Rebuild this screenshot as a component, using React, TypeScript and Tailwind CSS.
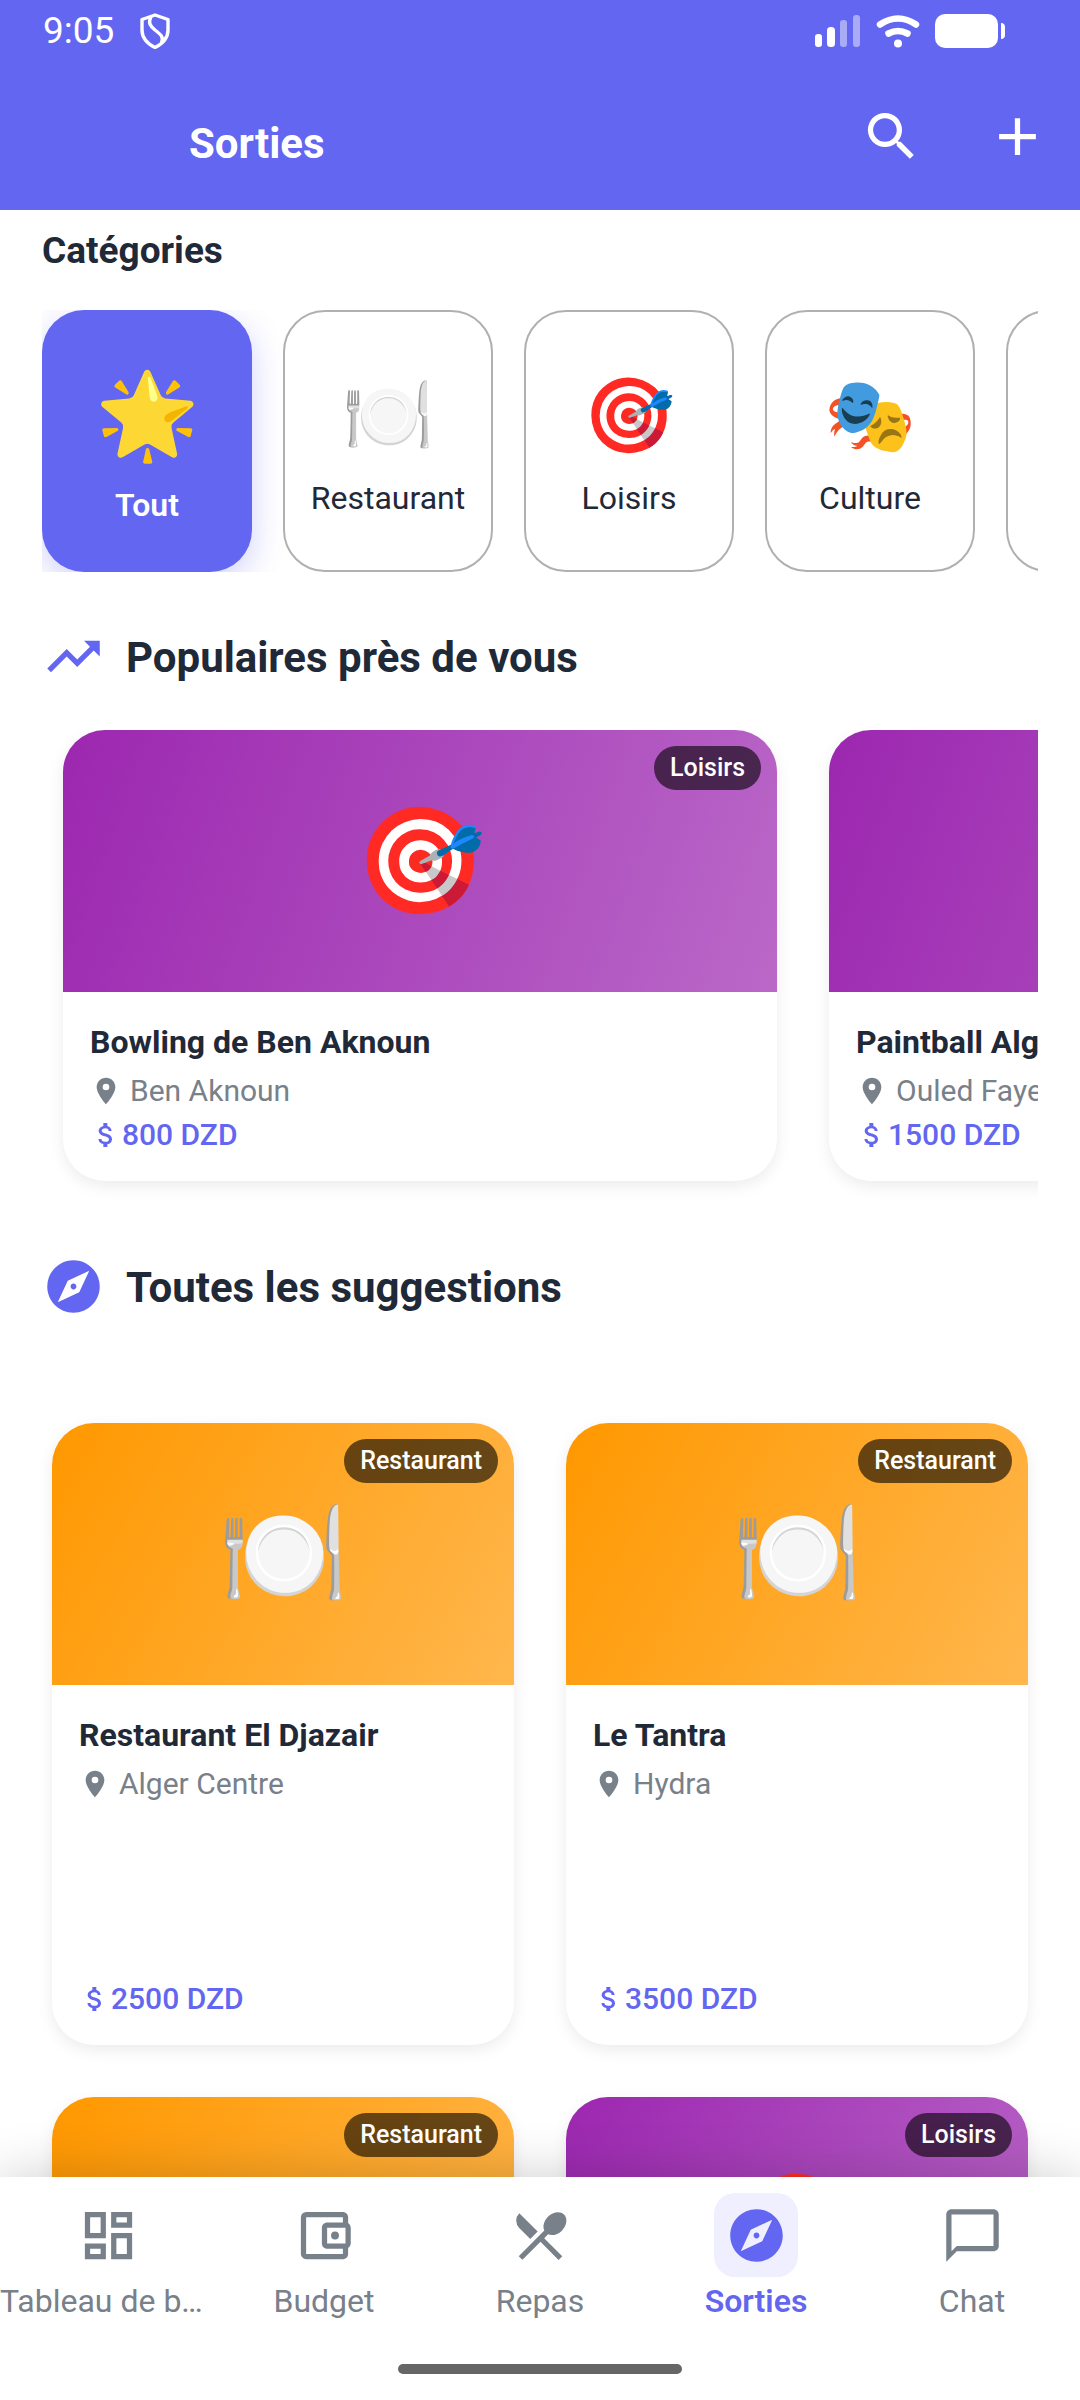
import React from "react";
import {
  MdAdd,
  MdAttachMoney,
  MdChatBubbleOutline,
  MdExplore,
  MdOutlineAccountBalanceWallet,
  MdOutlineDashboard,
  MdPlace,
  MdRestaurantMenu,
  MdSearch,
  MdTrendingUp,
} from "react-icons/md";

type Outing = {
  name: string;
  place: string;
  price: string;
  category: "Loisirs" | "Restaurant";
};

const categories = [
  { label: "Tout", emoji: "🌟", active: true },
  { label: "Restaurant", emoji: "🍽️" },
  { label: "Loisirs", emoji: "🎯" },
  { label: "Culture", emoji: "🎭" },
  { label: "Nature", emoji: "🌳" },
];

const popular: Outing[] = [
  { name: "Bowling de Ben Aknoun", place: "Ben Aknoun", price: "800 DZD", category: "Loisirs" },
  { name: "Paintball Alger", place: "Ouled Fayet", price: "1500 DZD", category: "Loisirs" },
];

const suggestions: Outing[] = [
  { name: "Restaurant El Djazair", place: "Alger Centre", price: "2500 DZD", category: "Restaurant" },
  { name: "Le Tantra", place: "Hydra", price: "3500 DZD", category: "Restaurant" },
  { name: "Le Dauphin", place: "Bab El Oued", price: "2000 DZD", category: "Restaurant" },
  { name: "Bowling de Ben Aknoun", place: "Ben Aknoun", price: "800 DZD", category: "Loisirs" },
];

const tabs = [
  { label: "Tableau de bord", Icon: MdOutlineDashboard },
  { label: "Budget", Icon: MdOutlineAccountBalanceWallet },
  { label: "Repas", Icon: MdRestaurantMenu },
  { label: "Sorties", Icon: MdExplore, active: true },
  { label: "Chat", Icon: MdChatBubbleOutline },
];

const banner = {
  Loisirs: "from-[#9c27b0] to-[#ba68c8]",
  Restaurant: "from-[#ff9800] to-[#ffb74d]",
};

const emoji = { Loisirs: "🎯", Restaurant: "🍽️" };

function StatusBar() {
  return (
    <div className="flex h-[63px] items-center pr-[75px] pb-[2px] pl-[43px]">
      <span className="text-[37px] leading-[42px]">9:05</span>
      <svg viewBox="0 0 30 36" className="ml-[26px] h-[36px] w-[30px]" fill="none" stroke="currentColor" strokeWidth="3.4" strokeLinejoin="round">
        <path d="M15 2 28 6.500V17c0 8-6 14-13 17.500C8 31 2 25 2 17V6.500Z" />
        <path d="M11 3.500C8 10 10 13 15 17c6 4.500 9 7 6.500 13" />
      </svg>
      <div className="ml-auto flex items-center gap-[15px]">
        <svg viewBox="0 0 46 34" className="h-[34px] w-[46px]" fill="currentColor">
          <rect x="0" y="20" width="7" height="13" rx="3" />
          <rect x="12" y="13" width="8" height="20" rx="3.500" />
          <rect x="25" y="6" width="7" height="27" rx="3" opacity=".45" />
          <rect x="38" y="1" width="7" height="32" rx="3" opacity=".45" />
        </svg>
        <svg viewBox="0 0 44 34" className="h-[34px] w-[44px]" fill="none" stroke="currentColor" strokeWidth="6.500" strokeLinecap="round">
          <path d="M4 10.500Q22-1.500 40 10.500" />
          <path d="M12.500 19.500Q22 14.500 31.500 19.500" />
          <circle cx="22" cy="29.500" r="4" fill="currentColor" stroke="none" />
        </svg>
        <svg viewBox="0 0 70 34" className="h-[34px] w-[70px]" fill="currentColor">
          <rect width="63" height="34" rx="10" />
          <path d="M66 9c3 0 4 2 4 4v8c0 2-1 4-4 4Z" />
        </svg>
      </div>
    </div>
  );
}

function SectionTitle({ Icon, children }: { Icon: React.ElementType; children: React.ReactNode }) {
  return (
    <div className="flex items-center gap-[21px]">
      <Icon className="size-[63px] text-[#6366f1]" />
      <h2 className="pt-[2px] text-[42px] leading-[50px] font-bold">{children}</h2>
    </div>
  );
}

function OutingCard({ outing, wide }: { outing: Outing; wide?: boolean }) {
  return (
    <article className="flex h-full flex-col overflow-hidden rounded-[42px] bg-white shadow-[0_5px_16px_rgba(0,0,0,0.08)]">
      <div
        className={`relative flex h-[262px] shrink-0 items-center justify-center ${
          wide ? "bg-linear-[110deg]" : "bg-linear-[120deg]"
        } ${banner[outing.category]}`}
      >
        <span className="text-[105px] leading-none">{emoji[outing.category]}</span>
        <span className="absolute top-4 right-4 rounded-full bg-black/60 px-4 text-[25px] leading-[44px] font-medium text-white">
          {outing.category}
        </span>
      </div>
      <div className="flex flex-1 flex-col px-[27px] pt-8 pb-7">
        <h3 className="truncate text-[32px] leading-[37px] font-bold">{outing.name}</h3>
        <p className="mt-3 flex items-center gap-2 text-[30px] leading-[36px] text-[#78808a]">
          <MdPlace className="size-[32px] shrink-0" />
          <span className="whitespace-nowrap">{outing.place}</span>
        </p>
        <p className="mt-auto flex items-center pt-2 text-[30px] leading-[36px] font-medium text-[#6366f1]">
          <MdAttachMoney className="size-[32px] shrink-0" />
          {outing.price}
        </p>
      </div>
    </article>
  );
}

export default function App() {
  return (
    <div className="flex h-screen flex-col overflow-hidden bg-white font-[Roboto,sans-serif] text-[#1f2937]">
      <header className="bg-[#6366f1] text-white">
        <StatusBar />
        <div className="flex h-[147px] items-center">
          <h1 className="flex-1 pt-[14px] pl-[189px] text-[42px] leading-[50px] font-bold">Sorties</h1>
          <button aria-label="Rechercher" className="flex size-[126px] items-center justify-center">
            <MdSearch className="size-[63px]" />
          </button>
          <button aria-label="Ajouter" className="flex size-[126px] items-center justify-center">
            <MdAdd className="size-[63px]" />
          </button>
        </div>
      </header>

      <main className="min-h-0 flex-1 overflow-hidden px-[42px] pt-5">
        <h2 className="text-[37px] leading-[42px] font-bold">Catégories</h2>
        <div className="mt-[38px] flex gap-[31px] overflow-hidden">
          {categories.map((c) => (
            <button
              key={c.label}
              className={`flex h-[262px] w-[210px] shrink-0 flex-col items-center justify-center rounded-[42px] pt-2 text-[32px] leading-[37px] ${
                c.active
                  ? "bg-[#6366f1] font-semibold text-white shadow-[0_10px_32px_rgba(99,102,241,0.3)]"
                  : "border-2 border-[#b0b0b0] bg-white"
              }`}
            >
              <span className={c.active ? "text-[84px] leading-[98px]" : "text-[74px] leading-[84px]"}>{c.emoji}</span>
              <span className="mt-[22px]">{c.label}</span>
            </button>
          ))}
        </div>

        <section className="mt-[53px]">
          <SectionTitle Icon={MdTrendingUp}>Populaires près de vous</SectionTitle>
          <div className="mt-[42px] flex gap-[52px] overflow-hidden pb-6 pl-[21px]">
            {popular.map((o) => (
              <div key={o.name} className="w-[714px] shrink-0">
                <OutingCard outing={o} wide />
              </div>
            ))}
          </div>
        </section>

        <section className="mt-[50px]">
          <SectionTitle Icon={MdExplore}>Toutes les suggestions</SectionTitle>
          <div className="mt-[105px] grid auto-rows-[622px] grid-cols-2 gap-[52px] px-[10px]">
            {suggestions.map((o) => (
              <OutingCard key={o.name} outing={o} />
            ))}
          </div>
        </section>
      </main>

      <nav className="relative z-10 bg-white pb-[26px] shadow-[0_0_52px_rgba(0,0,0,0.2)]">
        <div className="grid grid-cols-5 pt-4">
          {tabs.map(({ label, Icon, active }) => (
            <a
              key={label}
              href="#"
              className={`flex min-w-0 flex-col items-center ${active ? "font-semibold text-[#6366f1]" : "text-[#78808a]"}`}
            >
              <span className={`flex size-[84px] items-center justify-center rounded-[21px] ${active ? "bg-[#efefff]" : ""}`}>
                <Icon className="size-[63px]" />
              </span>
              <span className="mt-[5px] max-w-full truncate text-[32px] leading-[38px]">{label}</span>
            </a>
          ))}
        </div>
        <div className="mx-auto mt-11 h-[10px] w-[284px] rounded-full bg-[#666666]" />
      </nav>
    </div>
  );
}
